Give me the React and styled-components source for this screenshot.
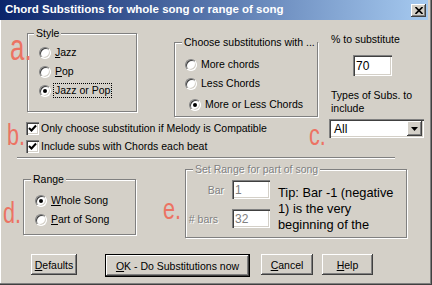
import React from 'react';
import styled, { createGlobalStyle } from 'styled-components';

const GlobalStyle = createGlobalStyle`
  html, body {
    margin: 0;
    padding: 0;
    background: #d4d0c8;
  }
  body {
    font-family: "Liberation Sans", Arial, sans-serif;
    font-size: 10.5px;
    color: #000;
  }
`;

const raised = `
  box-shadow: inset -1px -1px 0 #404040, inset 1px 1px 0 #fff, inset -2px -2px 0 #808080;
`;

const sunken = `
  box-shadow: inset 1px 1px 0 #808080, inset 2px 2px 0 #404040, inset -1px -1px 0 #fff, inset -2px -2px 0 #d4d0c8;
`;

const Window = styled.div`
  position: relative;
  width: 432px;
  height: 285px;
  box-sizing: border-box;
  background: #d4d0c8;
  box-shadow: inset -1px -1px 0 #404040, inset -2px -2px 0 #808080, inset 1px 0 0 #fff;
  overflow: hidden;
`;

const TitleBar = styled.div`
  display: flex;
  align-items: flex-start;
  justify-content: space-between;
  width: 428px;
  height: 20px;
  box-sizing: border-box;
  padding: 0 2px 0 5px;
  background: linear-gradient(to right, #0a246a, #a6caf0);
`;

const Title = styled.span`
  color: #fff;
  font-weight: bold;
  font-size: 11.5px;
  line-height: 19px;
  white-space: nowrap;
`;

const CloseButton = styled.div`
  width: 15px;
  height: 13px;
  margin-top: 4px;
  display: flex;
  align-items: center;
  justify-content: center;
  background: #d4d0c8;
  ${raised}
`;

const TopSection = styled.div`
  display: flex;
  align-items: flex-start;
`;

const LeftArea = styled.div`
  width: 320px;
`;

const GroupsRow = styled.div`
  display: flex;
  align-items: flex-start;
  height: 97px;
  padding-left: 27px;
`;

const Group = styled.div`
  position: relative;
  flex: none;
  box-sizing: border-box;
  width: ${p => p.$w}px;
  height: ${p => p.$h}px;
  margin-top: ${p => p.$mt || 0}px;
  margin-left: ${p => p.$ml || 0}px;
  border: 1px solid #808080;
  box-shadow: inset 1px 1px 0 #fff, 1px 1px 0 #fff;
`;

const Legend = styled.span`
  position: absolute;
  top: -7px;
  left: ${p => p.$left || 6}px;
  padding: 0 2px;
  background: #d4d0c8;
  line-height: 13px;
  white-space: nowrap;
  color: ${p => (p.$disabled ? '#808080' : '#000')};
  text-shadow: ${p => (p.$disabled ? '1px 1px 0 #fff' : 'none')};
`;

const OptionList = styled.div`
  padding-top: ${p => p.$pt}px;
  padding-left: ${p => p.$pl}px;
`;

const Option = styled.div`
  display: flex;
  align-items: center;
  gap: 2px;
  height: 19px;
  margin-top: ${p => p.$mt || 0}px;
  margin-left: ${p => p.$ml || 0}px;
  white-space: nowrap;
`;

const RadioCircle = styled.span`
  flex: none;
  width: 12px;
  height: 12px;
  box-sizing: border-box;
  border-radius: 50%;
  background: #fff;
  border: 1px solid;
  border-color: #808080 #fff #fff #808080;
  box-shadow: inset 1px 1px 0 #404040, inset -1px -1px 0 #d4d0c8;
  display: flex;
  align-items: center;
  justify-content: center;

  &::after {
    content: '';
    display: ${p => (p.$on ? 'block' : 'none')};
    width: 4px;
    height: 4px;
    border-radius: 50%;
    background: #000;
  }
`;

const OptionText = styled.span`
  line-height: 13px;
  padding: 0 1px;
  border: 1px dotted ${p => (p.$focus ? '#000' : 'transparent')};
`;

const U = styled.span`
  text-decoration: underline;
`;

const CheckList = styled.div`
  margin-top: 2px;
  padding-left: 26px;
`;

const CheckRow = styled.div`
  display: flex;
  align-items: center;
  gap: 2px;
  height: 18px;
  white-space: nowrap;
`;

const CheckBox = styled.span`
  flex: none;
  width: 13px;
  height: 13px;
  box-sizing: border-box;
  background: #fff;
  display: flex;
  align-items: center;
  justify-content: center;
  ${sunken}
`;

const RightCol = styled.div`
  width: 108px;
  padding-left: 11px;
  box-sizing: border-box;
`;

const Label = styled.div`
  margin-top: ${p => p.$mt || 0}px;
  line-height: 13px;
`;

const Field = styled.div`
  flex: none;
  box-sizing: border-box;
  width: ${p => p.$w}px;
  height: ${p => p.$h}px;
  margin-top: ${p => p.$mt || 0}px;
  margin-left: ${p => p.$ml || 0}px;
  padding: 0 3px;
  display: flex;
  align-items: center;
  background: #fff;
  color: ${p => (p.$disabled ? '#808080' : '#000')};
  font-size: 12px;
  ${sunken}
`;

const Combo = styled.div`
  box-sizing: border-box;
  width: 95px;
  height: 19px;
  margin-top: 4px;
  margin-left: -2px;
  padding: 2px;
  display: flex;
  align-items: center;
  background: #fff;
  ${sunken}
`;

const ComboText = styled.span`
  flex: 1;
  padding-left: 3px;
  font-size: 12px;
`;

const DropButton = styled.span`
  width: 15px;
  height: 15px;
  display: flex;
  align-items: center;
  justify-content: center;
  background: #d4d0c8;
  ${raised}
`;

const Separator = styled.div`
  width: 378px;
  margin: 2px 0 0 17px;
  border-top: 1px solid #808080;
  border-bottom: 1px solid #fff;
`;

const BottomRow = styled.div`
  display: flex;
  align-items: flex-start;
  height: 79px;
`;

const RangeContent = styled.div`
  display: flex;
  align-items: flex-start;
`;

const Fields = styled.div`
  flex: none;
`;

const FieldRow = styled.div`
  display: flex;
  align-items: center;
  margin-top: 10px;
`;

const FieldLabel = styled.span`
  width: 38px;
  box-sizing: border-box;
  padding-right: ${p => p.$pr || 0}px;
  text-align: right;
  color: #808080;
  text-shadow: 1px 1px 0 #fff;
  white-space: nowrap;
`;

const Tip = styled.div`
  width: 122px;
  margin: 15px 0 0 8px;
  font-size: 12.8px;
  line-height: 16px;
`;

const ButtonRow = styled.div`
  display: flex;
  align-items: flex-start;
  margin-top: 16px;
  padding-left: 31px;
`;

const Button = styled.div`
  flex: none;
  box-sizing: border-box;
  width: ${p => p.$w}px;
  height: ${p => (p.$default ? 23 : 21)}px;
  margin-left: ${p => p.$ml || 0}px;
  display: flex;
  align-items: center;
  justify-content: center;
  background: #d4d0c8;
  border: ${p => (p.$default ? '1px solid #000' : 'none')};
  white-space: nowrap;
  ${raised}
`;

const Mark = styled.span`
  position: absolute;
  left: ${p => p.$x}px;
  top: ${p => p.$y}px;
  font-family: "Liberation Sans", Arial, sans-serif;
  font-size: ${p => p.$size}px;
  line-height: 1;
  color: #ec7363;
  transform: scaleX(0.72);
  transform-origin: left top;
  pointer-events: none;
`;

const Radio = ({ on, focus, children, ...rest }) => (
  <Option {...rest}>
    <RadioCircle $on={on} />
    <OptionText $focus={focus}>{children}</OptionText>
  </Option>
);

const Check = ({ children }) => (
  <CheckRow>
    <CheckBox>
      <svg width="9" height="9" viewBox="0 0 9 9">
        <path d="M1 4 L3.5 6.5 L8 1.5" fill="none" stroke="#000" strokeWidth="2" />
      </svg>
    </CheckBox>
    <span>{children}</span>
  </CheckRow>
);

export default function App() {
  return (
    <>
      <GlobalStyle />
      <Window>
        <TitleBar>
          <Title>Chord Substitions for whole song or range of song</Title>
          <CloseButton>
            <svg width="8" height="7" viewBox="0 0 8 7">
              <path d="M0.5 0 L7.5 7 M7.5 0 L0.5 7" stroke="#000" strokeWidth="1.6" />
            </svg>
          </CloseButton>
        </TitleBar>

        <TopSection>
          <LeftArea>
            <GroupsRow>
              <Group $w={110} $h={79} $mt={13}>
                <Legend>Style</Legend>
                <OptionList $pt={9} $pl={11}>
                  <Radio><U>J</U>azz</Radio>
                  <Radio><U>P</U>op</Radio>
                  <Radio on focus>Jazz or Pop</Radio>
                </OptionList>
              </Group>
              <Group $w={144} $h={75} $mt={22} $ml={37}>
                <Legend $left={7}>Choose substitutions with ...</Legend>
                <OptionList $pt={12} $pl={10}>
                  <Radio>More chords</Radio>
                  <Radio>Less Chords</Radio>
                  <Radio on $mt={2} $ml={4}>More or Less Chords</Radio>
                </OptionList>
              </Group>
            </GroupsRow>
            <CheckList>
              <Check>Only choose substitution if Melody is Compatible</Check>
              <Check>Include subs with Chords each beat</Check>
            </CheckList>
          </LeftArea>

          <RightCol>
            <Label $mt={13}>% to substitute</Label>
            <Field $w={39} $h={21} $mt={9} $ml={22}>70</Field>
            <Label $mt={13}>Types of Subs. to include</Label>
            <Combo>
              <ComboText>All</ComboText>
              <DropButton>
                <svg width="7" height="4" viewBox="0 0 7 4">
                  <path d="M0 0 H7 L3.5 4 Z" fill="#000" />
                </svg>
              </DropButton>
            </Combo>
          </RightCol>
        </TopSection>

        <Separator />

        <BottomRow>
          <Group $w={113} $h={56} $mt={20} $ml={23}>
            <Legend $left={7}>Range</Legend>
            <OptionList $pt={11} $pl={11}>
              <Radio on><U>W</U>hole Song</Radio>
              <Radio><U>P</U>art of Song</Radio>
            </OptionList>
          </Group>
          <Group $w={222} $h={69} $mt={10} $ml={49}>
            <Legend $left={7} $disabled>Set Range for part of song</Legend>
            <RangeContent>
              <Fields>
                <FieldRow>
                  <FieldLabel>Bar</FieldLabel>
                  <Field $w={38} $h={19} $ml={8} $disabled>1</Field>
                </FieldRow>
                <FieldRow>
                  <FieldLabel $pr={6}># bars</FieldLabel>
                  <Field $w={38} $h={19} $ml={8} $disabled>32</Field>
                </FieldRow>
              </Fields>
              <Tip>Tip: Bar -1 (negative 1) is the very beginning of the</Tip>
            </RangeContent>
          </Group>
        </BottomRow>

        <ButtonRow>
          <Button $w={46}><U>D</U>efaults</Button>
          <Button $w={145} $ml={28} $default><U>O</U>K - Do Substitutions now</Button>
          <Button $w={52} $ml={11}><U>C</U>ancel</Button>
          <Button $w={51} $ml={9}><U>H</U>elp</Button>
        </ButtonRow>

        <Mark $x={10} $y={30} $size={36}>a.</Mark>
        <Mark $x={7} $y={120} $size={30}>b.</Mark>
        <Mark $x={309} $y={120} $size={30}>c.</Mark>
        <Mark $x={3} $y={198} $size={30}>d.</Mark>
        <Mark $x={163} $y={194} $size={30}>e.</Mark>
      </Window>
    </>
  );
}
